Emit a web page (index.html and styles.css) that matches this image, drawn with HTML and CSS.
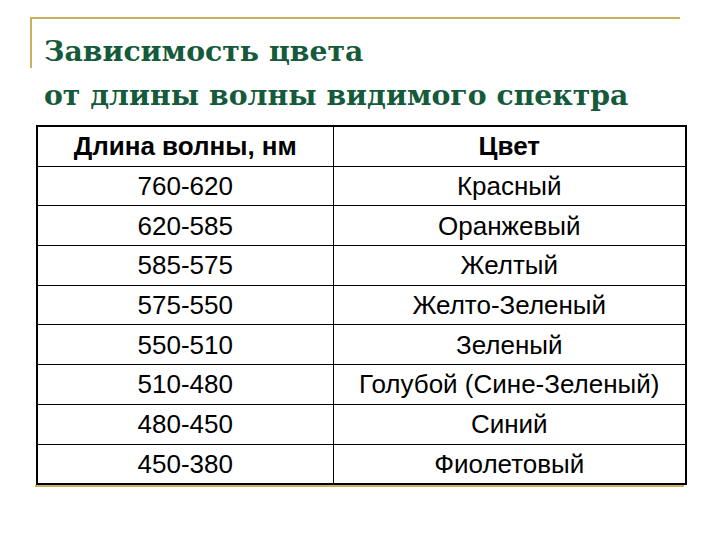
FILE: index.html
```html
<!DOCTYPE html>
<html lang="ru">
<head>
<meta charset="utf-8">
<title>Зависимость цвета от длины волны</title>
<link rel="stylesheet" href="styles.css">
</head>
<body>
<div class="slide">
  <div class="header">
    <h1 class="title">Зависимость цвета<br>от длины волны видимого спектра</h1>
  </div>
  <table class="spectrum">
    <colgroup><col class="c1"><col class="c2"></colgroup>
    <thead>
      <tr><th>Длина волны, нм</th><th>Цвет</th></tr>
    </thead>
    <tbody>
      <tr><td>760-620</td><td>Красный</td></tr>
      <tr><td>620-585</td><td>Оранжевый</td></tr>
      <tr><td>585-575</td><td>Желтый</td></tr>
      <tr><td>575-550</td><td>Желто-Зеленый</td></tr>
      <tr><td>550-510</td><td>Зеленый</td></tr>
      <tr><td>510-480</td><td>Голубой (Сине-Зеленый)</td></tr>
      <tr><td>480-450</td><td>Синий</td></tr>
      <tr><td>450-380</td><td>Фиолетовый</td></tr>
    </tbody>
  </table>
  <div class="underline"></div>
</div>
</body>
</html>
```
FILE: styles.css
```css
html, body {
  margin: 0;
  padding: 0;
  background: #ffffff;
}

.slide {
  width: 720px;
  height: 540px;
  padding-top: 17px;
  box-sizing: border-box;
}

.header {
  position: relative;
  margin-left: 30px;
  width: 648px;
}

.header::before {
  content: "";
  position: absolute;
  left: 0;
  top: 0;
  width: 648px;
  height: 49px;
  border-top: 2px solid #c9b063;
  border-left: 2px solid #c9b063;
}

.title {
  margin: 0;
  padding: 12px 0 0 14px;
  font-family: "DejaVu Serif", "Liberation Serif", serif;
  font-weight: bold;
  font-size: 28.3px;
  line-height: 44px;
  color: #145a3b;
  white-space: nowrap;
}

.spectrum {
  margin: 8px 0 0 36px;
  width: 649px;
  table-layout: fixed;
  border-collapse: collapse;
  border: 2px solid #000;
  font-family: "Liberation Sans", Arial, sans-serif;
  font-size: 26px;
  color: #000;
}

.c1 { width: 296px; }
.c2 { width: 353px; }

.spectrum th,
.spectrum td {
  height: 38.7px;
  padding: 0;
  border: 1px solid #000;
  text-align: center;
  vertical-align: middle;
  line-height: 28px;
}

.spectrum th {
  font-weight: bold;
}

.underline {
  margin-left: 35px;
  width: 649px;
  height: 2px;
  background: #c9b063;
}
```
